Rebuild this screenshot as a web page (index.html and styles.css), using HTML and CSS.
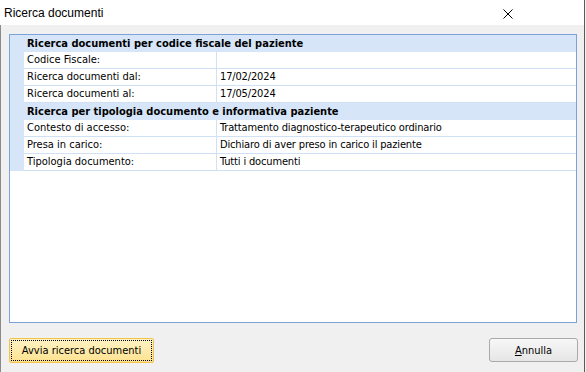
FILE: index.html
```html
<!DOCTYPE html>
<html lang="it">
<head>
    <title>Ricerca documenti</title>
    <link rel="stylesheet" href="styles.css">
</head>
<body>
    <div class="window">
        <!-- Title bar -->
        <div class="titlebar">
            <span class="title">Ricerca documenti</span>
            <svg class="close" width="10" height="10" viewBox="0 0 10 10">
                <path d="M0.5 0.5 L9.5 9.5 M9.5 0.5 L0.5 9.5" stroke="#000" stroke-width="1" fill="none"/>
            </svg>
        </div>

        <div class="content">
            <!-- Property grid -->
            <div class="panel">
                <div class="row head">
                    <div class="gutter"></div>
                    <div class="section">Ricerca documenti per codice fiscale del paziente</div>
                </div>
                <div class="row">
                    <div class="gutter"></div>
                    <div class="label">Codice Fiscale:</div>
                    <div class="value"></div>
                </div>
                <div class="row">
                    <div class="gutter"></div>
                    <div class="label">Ricerca documenti dal:</div>
                    <div class="value">17/02/2024</div>
                </div>
                <div class="row">
                    <div class="gutter"></div>
                    <div class="label">Ricerca documenti al:</div>
                    <div class="value">17/05/2024</div>
                </div>
                <div class="row head">
                    <div class="gutter"></div>
                    <div class="section">Ricerca per tipologia documento e informativa paziente</div>
                </div>
                <div class="row">
                    <div class="gutter"></div>
                    <div class="label">Contesto di accesso:</div>
                    <div class="value">Trattamento diagnostico-terapeutico ordinario</div>
                </div>
                <div class="row">
                    <div class="gutter"></div>
                    <div class="label">Presa in carico:</div>
                    <div class="value">Dichiaro di aver preso in carico il paziente</div>
                </div>
                <div class="row">
                    <div class="gutter"></div>
                    <div class="label">Tipologia documento:</div>
                    <div class="value">Tutti i documenti</div>
                </div>
            </div>

            <!-- Buttons -->
            <div class="footer">
                <button class="btn primary">Avvia ricerca documenti</button>
                <button class="btn"><u>A</u>nnulla</button>
            </div>
        </div>
    </div>
</body>
</html>
```

FILE: styles.css
```css
body {
    margin: 0;
    background-color: #f0f0f0;
    font-family: "DejaVu Sans Condensed", "DejaVu Sans", sans-serif;
    font-size: 11px;
    color: #000;
}

/* Dialog frame */
.window {
    width: 584px;
    height: 372px;
    border-right: 1px solid #5a5a5a;
    display: flex;
    flex-direction: column;
    background-color: #f0f0f0;
}

.titlebar {
    height: 25px;
    background-color: #fff;
    display: flex;
    align-items: center;
    justify-content: space-between;
    padding: 0 71px 0 4px;
}

.title {
    font-family: "Liberation Sans", sans-serif;
    font-size: 12px;
}

.close {
    margin-top: 3px;
}

.content {
    flex: 1;
    border-left: 1px solid #8c8c8c;
    padding: 9px 7px 0 8px;
    display: flex;
    flex-direction: column;
}

/* Property grid */
.panel {
    height: 287px;
    border: 1px solid #7da2d8;
    background-color: #fff;
}

.row {
    display: flex;
    height: 17px;
}

.gutter {
    width: 14px;
    background-color: #d6e6f8;
}

.label,
.value {
    height: 16px;
    line-height: 16px;
    padding-left: 3px;
    border-bottom: 1px solid #d0e1f6;
    white-space: nowrap;
}

.label {
    width: 189px;
    border-right: 1px solid #d0e1f6;
}

.value {
    flex: 1;
    letter-spacing: -0.15px;
}

.head {
    background-color: #d6e6f8;
}

.section {
    flex: 1;
    line-height: 17px;
    padding-left: 3px;
    font-weight: bold;
}

/* Buttons */
.footer {
    display: flex;
    justify-content: space-between;
    margin-top: 15px;
}

.btn {
    font-family: "DejaVu Sans Condensed", "DejaVu Sans", sans-serif;
    font-size: 11px;
    height: 24px;
    width: 89px;
    margin-right: -1px;
    border: 1px solid #a9a9a9;
    border-radius: 3px;
    background: linear-gradient(#f7f7f7, #e6e6e6);
    color: #000;
    padding: 0;
}

.primary {
    width: 145px;
    height: 25px;
    margin-right: 0;
    border-color: #f2c34a;
    border-radius: 2px;
    background: linear-gradient(#fff3c6, #fde28e);
    outline: 1px dotted #000;
    outline-offset: -3px;
}
```
